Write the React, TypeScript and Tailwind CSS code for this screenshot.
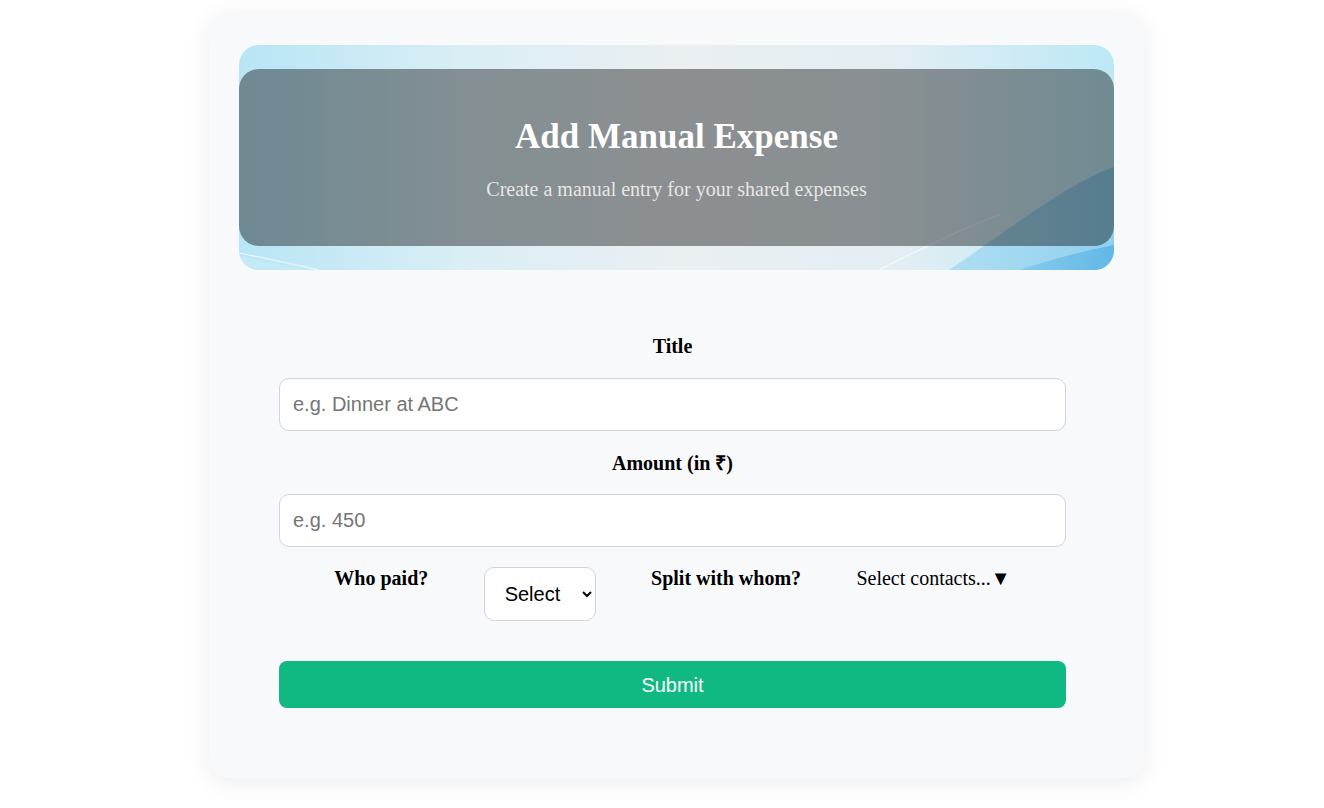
import React from "react";

function BannerArt() {
  return (
    <svg
      className="absolute inset-0 h-full w-full"
      viewBox="0 0 875 225"
      preserveAspectRatio="none"
      aria-hidden="true"
    >
      <defs>
        <linearGradient id="base" x1="0" y1="0" x2="1" y2="0">
          <stop offset="0" stopColor="#b8e5f5" />
          <stop offset="0.25" stopColor="#d9eef5" />
          <stop offset="0.5" stopColor="#eaeff2" />
          <stop offset="0.75" stopColor="#e3eef3" />
          <stop offset="1" stopColor="#bce8f6" />
        </linearGradient>
        <linearGradient id="wave1" x1="0" y1="0" x2="1" y2="0">
          <stop offset="0" stopColor="#a9dcf2" />
          <stop offset="1" stopColor="#8ccdee" />
        </linearGradient>
        <linearGradient id="wave2" x1="0" y1="0" x2="1" y2="0">
          <stop offset="0" stopColor="#86caec" />
          <stop offset="1" stopColor="#62b8e6" />
        </linearGradient>
      </defs>
      <rect width="875" height="225" fill="url(#base)" />
      <path d="M0 210 Q 30 218 70 225 L0 225 Z" fill="#c6ebf7" opacity="0.7" />
      <path d="M0 208 Q 40 216 80 225" stroke="#ffffff" strokeWidth="1.5" fill="none" opacity="0.6" />
      <path
        d="M710 225 C 770 185, 825 140, 875 122 L875 225 Z"
        fill="url(#wave1)"
        opacity="0.9"
      />
      <path
        d="M640 225 C 690 200, 720 185, 760 170"
        stroke="#ffffff"
        strokeWidth="1.5"
        fill="none"
        opacity="0.5"
      />
      <path
        d="M780 225 C 820 212, 850 205, 875 200 L875 225 Z"
        fill="url(#wave2)"
      />
    </svg>
  );
}

const sans = { fontFamily: '"Liberation Sans", Arial, sans-serif' };

export default function App() {
  return (
    <div
      className="min-h-[808px] bg-white pt-[13px] pb-[30px]"
      style={{ fontFamily: '"Liberation Serif", "Times New Roman", serif' }}
    >
      <div className="ml-[209px] w-[935px] rounded-[20px] bg-[#f8f9fb] px-[30px] pt-[32px] pb-[70px] shadow-[0_4px_24px_rgba(0,0,0,0.08)]">
        {/* Banner */}
        <div className="relative overflow-hidden rounded-[20px] py-[24px]">
          <BannerArt />
          <div className="relative flex flex-col items-center rounded-[20px] bg-[rgba(0,0,0,0.4)] pt-[47px] pb-[46px]">
            <h2 className="text-[35px] font-bold leading-[42px] text-white">
              Add Manual Expense
            </h2>
            <p className="mt-[20px] text-[20px] leading-[22px] text-[#e6e6e6]">
              Create a manual entry for your shared expenses
            </p>
          </div>
        </div>

        {/* Form */}
        <form
          className="ml-[40px] mt-[65px] flex w-[787px] flex-col"
          onSubmit={(e) => e.preventDefault()}
        >
          <label className="text-center text-[20px] font-bold leading-[22px] text-black">
            Title
          </label>
          <input
            type="text"
            placeholder="e.g. Dinner at ABC"
            className="mt-[21px] h-[53px] w-full rounded-[10px] border border-[#d4d4d8] bg-white px-[13px] text-[20px] text-black outline-none placeholder:text-[#757575]"
            style={sans}
          />
          <label className="mt-[21px] text-center text-[20px] font-bold leading-[22px] text-black">
            Amount (in ₹)
          </label>
          <input
            type="text"
            placeholder="e.g. 450"
            className="mt-[20px] h-[53px] w-full rounded-[10px] border border-[#d4d4d8] bg-white px-[13px] text-[20px] text-black outline-none placeholder:text-[#757575]"
            style={sans}
          />

          <div className="mt-[20px] flex items-start justify-evenly">
            <span className="text-[20px] font-bold leading-[22px] text-black">Who paid?</span>
            <select
              className="h-[54px] w-[112px] rounded-[10px] border border-[#d4d4d8] bg-white pl-[16px] pr-[8px] text-[20px] text-black"
              style={sans}
              defaultValue=""
            >
              <option value="">Select</option>
            </select>
            <span className="text-[20px] font-bold leading-[22px] text-black">Split with whom?</span>
            <span className="text-[20px] leading-[22px] text-black">
              Select contacts...<span className="text-[20px]">▼</span>
            </span>
          </div>

          <button
            type="submit"
            className="mt-[40px] h-[47px] w-full rounded-[8px] bg-[#10b981] text-[20px] text-white"
            style={sans}
          >
            Submit
          </button>
        </form>
      </div>
    </div>
  );
}
